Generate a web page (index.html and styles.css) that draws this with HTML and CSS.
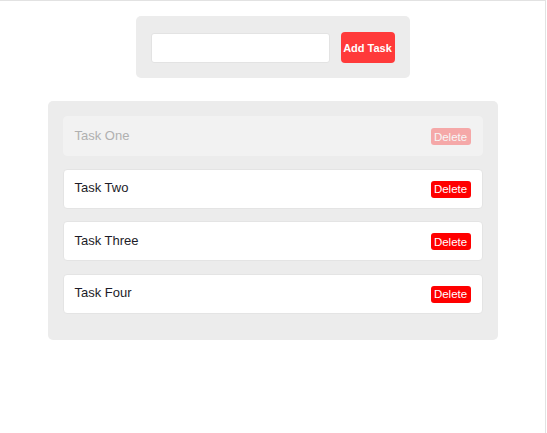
FILE: index.html
```html
<!DOCTYPE html>
<html>
<head>
<meta charset="utf-8">
<link rel="stylesheet" href="styles.css">
</head>
<body>
<div class="frame">
  <form class="add-form">
    <input class="task-input" type="text">
    <button class="add-btn" type="button">Add Task</button>
  </form>
  <ul class="task-list">
    <li class="task done"><span class="task-name">Task One</span><button class="del-btn" type="button">Delete</button></li>
    <li class="task"><span class="task-name">Task Two</span><button class="del-btn" type="button">Delete</button></li>
    <li class="task"><span class="task-name">Task Three</span><button class="del-btn" type="button">Delete</button></li>
    <li class="task"><span class="task-name">Task Four</span><button class="del-btn" type="button">Delete</button></li>
  </ul>
</div>
</body>
</html>
```
FILE: styles.css
```css
html, body {
  margin: 0;
  padding: 0;
  background: #fff;
  font-family: "Liberation Sans", Arial, sans-serif;
}
.frame {
  width: 545px;
  height: 432px;
  border-top: 1px solid #e2e2e2;
  border-right: 1px solid #e2e2e2;
  display: flex;
  flex-direction: column;
  align-items: center;
  padding-top: 15px;
  box-sizing: content-box;
}
.add-form {
  display: flex;
  align-items: center;
  gap: 11px;
  background: #ececec;
  border-radius: 5px;
  padding: 16px 15px 15px 15px;
  margin: 0;
}
.task-input {
  width: 179px;
  height: 30px;
  box-sizing: border-box;
  border: 1px solid #e3e3e3;
  border-radius: 3px;
  background: #fff;
  margin: 0;
  padding: 0 8px;
}
.add-btn {
  width: 54px;
  height: 31px;
  border: none;
  border-radius: 4px;
  background: #ff3a3a;
  color: #fff;
  font-family: "Liberation Sans", Arial, sans-serif;
  font-weight: bold;
  font-size: 11px;
  padding: 0;
  margin: 0;
}
.task-list {
  list-style: none;
  margin: 23px 0 0 0;
  padding: 15px 15px 14px 15px;
  width: 450px;
  box-sizing: border-box;
  background: #ececec;
  border-radius: 5px;
}
.task {
  display: flex;
  align-items: center;
  justify-content: space-between;
  height: 40px;
  box-sizing: border-box;
  padding: 0 11px 0 11px;
  margin-bottom: 12.5px;
  background: #fff;
  border: 1px solid #e4e4e4;
  border-radius: 4px;
}
.task-name {
  font-size: 13px;
  color: #1c1c28;
  margin-top: -2px;
}
.del-btn {
  height: 17px;
  width: 40px;
  border: none;
  border-radius: 3px;
  background: #ff0000;
  color: #fff;
  font-family: "Liberation Sans", Arial, sans-serif;
  font-size: 11.5px;
  padding: 0;
  margin: 0;
  margin-top: 1px;
}
.task.done {
  background: #f2f2f2;
  border-color: #f2f2f2;
}
.task.done .task-name {
  color: #b0b0b0;
}
.task.done .del-btn {
  opacity: 0.3;
}
```
